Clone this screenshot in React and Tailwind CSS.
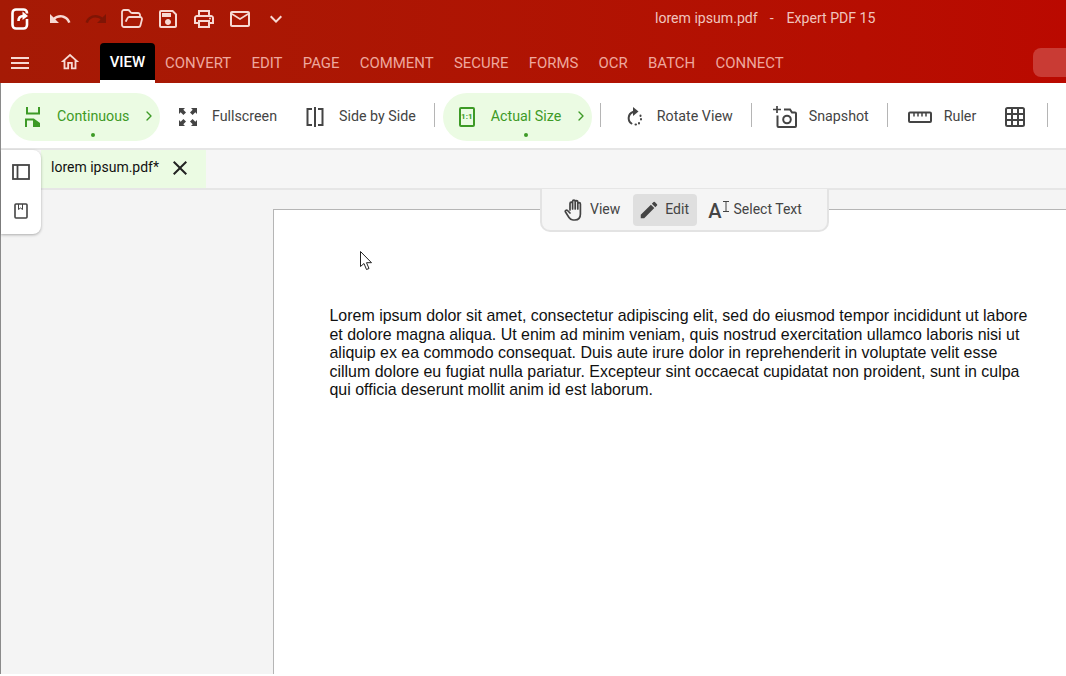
import { FolderOpen, ChevronRight } from 'lucide-react'
import {
  MdUndo, MdRedo, MdOutlineSave, MdOutlinePrint, MdMailOutline,
  MdKeyboardArrowDown, MdMenu, MdOutlineHome, MdClose, MdEdit,
} from 'react-icons/md'

const tabs = ['CONVERT', 'EDIT', 'PAGE', 'COMMENT', 'SECURE', 'FORMS', 'OCR', 'BATCH', 'CONNECT']

function Logo() {
  return (
    <svg width="18" height="22" viewBox="0 0 18 22" fill="none" stroke="#fff" strokeWidth="2.600" className="block">
      <path d="M16 5.500V5a3.500 3.500 0 0 0-3.500-3.500h-7A3.500 3.500 0 0 0 1.500 5v12A3.500 3.500 0 0 0 5 20.500h7.500A3.500 3.500 0 0 0 16 17v-6" />
      <path d="M7.500 13c0-3 1.500-5 5-5" />
      <path d="M11.500 3.500l5.500 4.500-5.500 4z" fill="#fff" stroke="none" />
    </svg>
  )
}

function ContinuousIcon() {
  return (
    <svg width="16" height="20" viewBox="0 0 16 20" fill="none" stroke="#3d9a26" strokeWidth="2">
      <path d="M2 0v6.500h12V0" />
      <path d="M1 20v-7.500h7.500L14 16.500V20" />
      <path d="M8 12.500l6 3.500v4H8z" fill="#3d9a26" stroke="none" />
    </svg>
  )
}

function FullscreenIcon() {
  return (
    <svg width="18" height="18" viewBox="0 0 18 18" fill="#444">
      <path d="M0 0h6L4.300 1.700 7 4.400 4.400 7 1.700 4.300 0 6zM18 0v6l-1.700-1.700L13.600 7 11 4.400l2.700-2.700L12 0zM0 18v-6l1.700 1.700L4.400 11 7 13.600l-2.700 2.700L6 18zM18 18h-6l1.700-1.700L11 13.600l2.600-2.600 2.700 2.700L18 12z" />
    </svg>
  )
}

function SideBySideIcon() {
  return (
    <svg width="18" height="20" viewBox="0 0 18 20" fill="none" stroke="#444" strokeWidth="2">
      <path d="M6 2H1.500v16H6M12 2h4.500v16H12M9 0v20" />
    </svg>
  )
}

function ActualSizeIcon() {
  return (
    <div className="w-[16px] h-[20px] border-2 border-[#3d9a26] rounded-[2px] flex items-center justify-center text-[8px] font-bold text-[#3d9a26]">
      1:1
    </div>
  )
}

function RotateIcon() {
  return (
    <svg width="18" height="22" viewBox="0 0 18 22" fill="none" stroke="#444" strokeWidth="2" strokeLinecap="round">
      <path d="M8 6a6.500 6.500 0 0 0-1.500 11.500" />
      <path d="M8 1l5.500 4.500L8 10z" fill="#444" stroke="none" />
      <path d="M15.500 9.500v.5M16 13v.5M14 17v.5M10.500 18.500h.5" />
    </svg>
  )
}

function SnapshotIcon() {
  return (
    <svg width="24" height="22" viewBox="0 0 24 22" fill="none" stroke="#444" strokeWidth="2">
      <path d="M4 0v7M0 3.500h8" strokeWidth="1.700" />
      <path d="M4.500 9.500V20a1 1 0 0 0 1 1H22a1 1 0 0 0 1-1V7.500a1 1 0 0 0-1-1h-3L17 3.500h-6" />
      <circle cx="14" cy="13.500" r="3.800" />
    </svg>
  )
}

function RulerIcon() {
  return (
    <svg width="24" height="12" viewBox="0 0 24 12" fill="none" stroke="#444" strokeWidth="2">
      <rect x="1" y="1.500" width="22" height="9.500" rx="1" />
      <path d="M6 2v3.500M10 2v3.500M14 2v3.500M18 2v3.500" strokeWidth="1.500" />
    </svg>
  )
}

function TableIcon() {
  return (
    <svg width="20" height="20" viewBox="0 0 20 20" fill="none" stroke="#444" strokeWidth="2">
      <rect x="1" y="1" width="18" height="18" rx="1.500" />
      <path d="M7 1v18M13 1v18M1 7h18M1 13h18" />
    </svg>
  )
}

function SidebarIcon() {
  return (
    <svg width="18" height="16" viewBox="0 0 18 16" fill="none" stroke="#444" strokeWidth="1.800">
      <rect x="1" y="1" width="16" height="14" />
      <path d="M5.500 1v14" />
    </svg>
  )
}

function BookmarkIcon() {
  return (
    <svg width="14" height="16" viewBox="0 0 14 16" fill="none" stroke="#444" strokeWidth="1.600">
      <rect x="1" y="1" width="12" height="14" rx="1" />
      <path d="M4.500 1v5.500l2-1.500 2 1.500V1" strokeWidth="1" />
    </svg>
  )
}

function HandIcon() {
  return (
    <svg width="20" height="22" viewBox="0 0 20 22" fill="none" stroke="#444" strokeWidth="1.700" strokeLinecap="round" strokeLinejoin="round">
      <path d="M6 11V4.500a1.300 1.300 0 0 1 2.600 0V10M8.600 10V2.500a1.300 1.300 0 0 1 2.600 0V10M11.200 10V3a1.300 1.300 0 0 1 2.600 0v7M13.800 10V5a1.300 1.300 0 0 1 2.600 0v10c0 3.500-2 6-5.500 6H9c-2 0-3-1-4-2.500L1.500 13c-.8-1.200 1-2.500 2-1.500L6 14" />
    </svg>
  )
}

function IBeamIcon() {
  return (
    <svg width="6" height="11" viewBox="0 0 6 11" fill="none" stroke="#444" strokeWidth="1" className="block">
      <path d="M0 .500h6M0 10.500h6M3 .500v10" />
    </svg>
  )
}

function CursorIcon() {
  return (
    <svg width="13" height="20" viewBox="0 0 13 20" fill="#fff" stroke="#222" strokeWidth="1">
      <path d="M.5.500v15l3.500-3 2.500 6 2.500-1-2.500-5.800h5z" />
    </svg>
  )
}

function Sep({ className }) {
  return <div className={`w-px h-[24px] -mt-[4px] bg-[#b5b5b5] shrink-0 ${className}`} />
}

function Item({ icon, label, iconBox, gap, className = '' }) {
  return (
    <div className={`flex items-center shrink-0 ${className}`}>
      <div className={`flex justify-center ${iconBox}`}>{icon}</div>
      <span className={`${gap} text-[14.250px] text-[#444] whitespace-nowrap`}>{label}</span>
    </div>
  )
}

function GreenPill({ icon, label, className }) {
  return (
    <div className={`relative h-[48px] rounded-[24px] bg-[#ebfbe3] flex items-center shrink-0 ${className}`}>
      {icon}
      <span className="text-[14.250px] text-[#3d9a26] whitespace-nowrap">{label}</span>
      <ChevronRight size={16} strokeWidth={2} className="text-[#3d9a26] absolute right-[3px] top-[15px]" />
      <div className="absolute bottom-[4px] left-[83.500px] -translate-x-1/2 w-[4px] h-[4px] rounded-full bg-[#3d9a26]" />
    </div>
  )
}

export default function App() {
  return (
    <div className="relative w-[1066px] h-[676px] overflow-hidden bg-white flex flex-col font-['Roboto',sans-serif]">
      {/* Red header */}
      <div className="h-[83px] bg-gradient-to-r from-[#a51a05] to-[#ba0900] shrink-0 flex flex-col">
        <div className="h-[38px] flex items-center pl-[11px] text-[#f7d9d3]">
          <Logo />
          <div className="ml-[19px] flex items-center gap-[12px]">
            <MdUndo size={24} />
            <MdRedo size={24} className="text-[#7f1505]" />
            <FolderOpen size={24} strokeWidth={1.800} />
            <MdOutlineSave size={24} />
            <MdOutlinePrint size={24} />
            <MdMailOutline size={24} />
            <MdKeyboardArrowDown size={24} />
          </div>
          <div className="ml-[367px] text-[14.100px] text-[#f0c4bd] whitespace-nowrap">
            lorem ipsum.pdf<span className="ml-[12px]">-</span><span className="ml-[13px]">Expert PDF 15</span>
          </div>
        </div>
        <div className="h-[45px] flex items-end relative">
          <MdMenu size={24} className="ml-[8px] mb-[8px] text-[#f7d9d3]" />
          <MdOutlineHome size={22} className="ml-[27px] mb-[10px] text-[#f7d9d3]" />
          <div className="ml-[19px] w-[55px] h-[40px] bg-black border-b-[3px] border-white rounded-t-[4px] flex items-center justify-center text-[15px] text-white font-medium pt-[2px]">
            VIEW
          </div>
          <div className="ml-[10px] h-[40px] flex items-center gap-[20.250px] text-[14.950px] text-[#eea89e] whitespace-nowrap">
            {tabs.map((t) => (
              <span key={t}>{t}</span>
            ))}
          </div>
          <div className="absolute left-[1033px] top-[10px] w-[40px] h-[29px] rounded-[8px] bg-[#c93b34]" />
        </div>
      </div>

      {/* Ribbon */}
      <div className="h-[67px] shrink-0 flex items-center border-b-2 border-[#e6e6e6] pl-[9px] pt-[3px]">
        <GreenPill
          className="w-[151px]"
          label="Continuous"
          icon={<div className="ml-[16px] mr-[16px]"><ContinuousIcon /></div>}
        />
        <Item className="ml-[19px]" iconBox="w-[18px]" gap="ml-[15px]" icon={<FullscreenIcon />} label="Fullscreen" />
        <Item className="ml-[29px]" iconBox="w-[18px]" gap="ml-[15px]" icon={<SideBySideIcon />} label="Side by Side" />
        <Sep className="ml-[18px]" />
        <GreenPill
          className="ml-[8px] w-[149px]"
          label="Actual Size"
          icon={<div className="ml-[16px] mr-[16px]"><ActualSizeIcon /></div>}
        />
        <Sep className="ml-[8px]" />
        <Item className="ml-[24px]" iconBox="w-[18px]" gap="ml-[14px]" icon={<RotateIcon />} label="Rotate View" />
        <Sep className="ml-[18px]" />
        <Item className="ml-[21px]" iconBox="w-[24px]" gap="ml-[12px]" icon={<SnapshotIcon />} label="Snapshot" />
        <Sep className="ml-[18px]" />
        <Item className="ml-[20px]" iconBox="w-[24px]" gap="ml-[12px]" icon={<RulerIcon />} label="Ruler" />
        <div className="ml-[29px]"><TableIcon /></div>
        <Sep className="ml-[22px]" />
      </div>

      {/* File tabs */}
      <div className="h-[40px] shrink-0 bg-[#f6f6f6] border-b-2 border-[#e6e6e6] flex">
        <div className="ml-[41px] w-[165px] h-[38px] bg-[#ebfbe3] flex items-center pl-[10px] pb-[4px]">
          <span className="text-[14px] text-[#111] whitespace-nowrap">lorem ipsum.pdf*</span>
          <MdClose size={24} className="ml-[9px] mt-[2px] text-[#222]" />
        </div>
      </div>

      {/* Document area */}
      <div className="flex-1 min-h-0 bg-[#f4f4f4] pl-[273px] pt-[19px] mb-[2px]">
        <div className="h-full bg-white border-l border-t border-[#b5b5b5] pl-[55.500px] pt-[97px]">
          <p className="w-[710px] font-['Liberation_Sans',sans-serif] text-[15.960px] leading-[18.500px] text-[#111]">
            Lorem ipsum dolor sit amet, consectetur adipiscing elit, sed do eiusmod tempor incididunt ut labore et dolore magna aliqua. Ut enim ad minim veniam, quis nostrud exercitation ullamco laboris nisi ut aliquip ex ea commodo consequat. Duis aute irure dolor in reprehenderit in voluptate velit esse cillum dolore eu fugiat nulla pariatur. Excepteur sint occaecat cupidatat non proident, sunt in culpa qui officia deserunt mollit anim id est laborum.
          </p>
        </div>
      </div>

      {/* Window edge */}
      <div className="absolute left-0 top-[83px] bottom-[2px] w-px bg-[#8a8a8a]" />

      {/* Left floating panel */}
      <div className="absolute left-[1px] top-[150px] w-[40px] h-[84px] bg-white rounded-r-[8px] shadow-[0_1px_3px_rgba(0,0,0,0.3)] flex flex-col items-center">
        <div className="mt-[14px]"><SidebarIcon /></div>
        <div className="mt-[23px]"><BookmarkIcon /></div>
      </div>

      {/* Mode toolbar */}
      <div className="absolute left-[540px] top-[189px] w-[289px] h-[43px] bg-[#f5f5f5] border-2 border-t-0 border-[#e3e3e3] rounded-b-[10px] flex items-center pl-[22px] text-[14px] text-[#444]">
        <HandIcon />
        <span className="ml-[6px]">View</span>
        <div className="ml-[13px] w-[64px] h-[32px] rounded-[4px] bg-[#dfdfdf] flex items-center pl-[5px]">
          <MdEdit size={22} />
          <span className="ml-[5px]">Edit</span>
        </div>
        <div className="ml-[11px] flex items-center">
          <span className="text-[20px] font-medium leading-none mt-[3px]">A</span>
          <div className="ml-[1px] -mt-[6px]"><IBeamIcon /></div>
          <span className="ml-[5px]">Select Text</span>
        </div>
      </div>

      {/* Mouse pointer */}
      <div className="absolute left-[360px] top-[251px]"><CursorIcon /></div>
    </div>
  )
}
